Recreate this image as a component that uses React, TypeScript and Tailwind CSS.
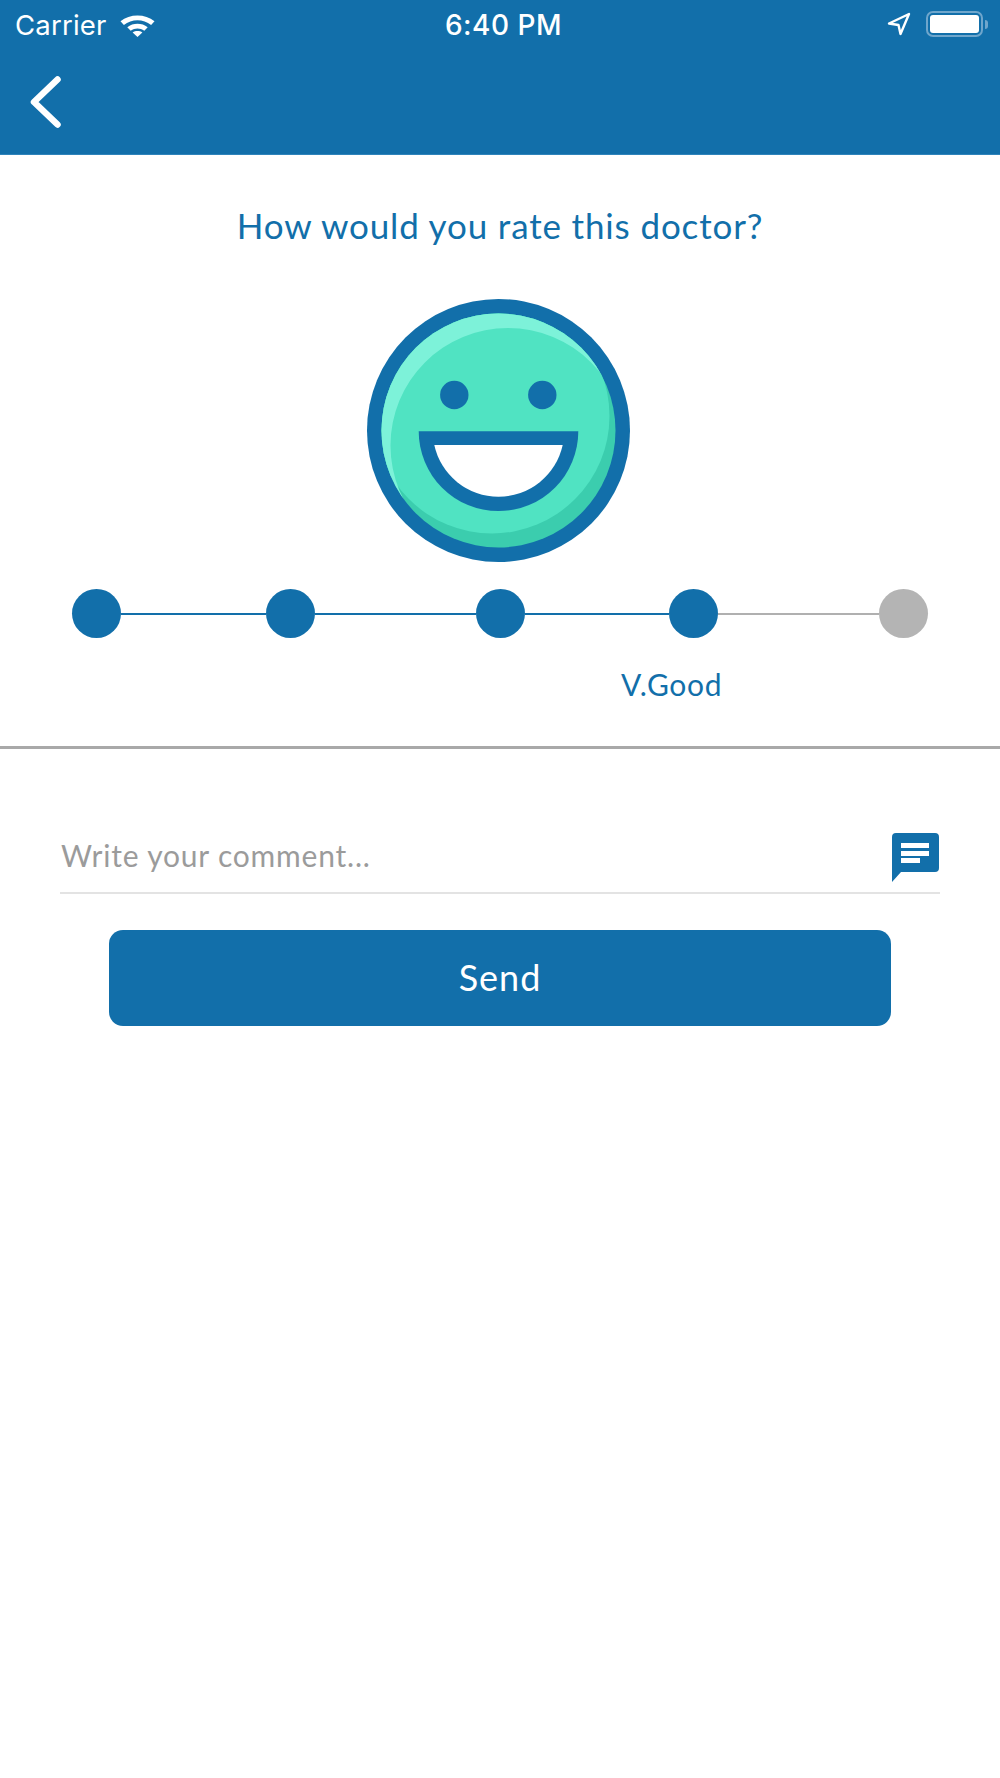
import React from "react";

function Wifi() {
  return (
    <svg width="35" height="24" viewBox="0 0 36 26" preserveAspectRatio="none" className="ml-[13px]">
      <path d="M0.5 9C10 0.5 26 0.5 35.5 9L32 13C24 6 12 6 4 13Z" fill="#fff" />
      <path d="M7.5 15.5C13.5 10.5 22.5 10.5 28.5 15.5L25 19.3C20.5 16 15.5 16 11 19.3Z" fill="#fff" />
      <path d="M13 21C16 19 20 19 23 21L18 26Z" fill="#fff" />
    </svg>
  );
}

function Face() {
  return (
    <svg width="263" height="263" viewBox="0 0 263 263" className="block">
      <defs>
        <clipPath id="inner">
          <circle cx="131.5" cy="131.5" r="117" />
        </clipPath>
      </defs>
      <circle cx="131.5" cy="131.5" r="131.5" fill="#126faa" />
      <g clipPath="url(#inner)">
        <rect width="263" height="263" fill="#3bcdae" />
        <circle cx="125" cy="117" r="117.5" fill="#50e3c2" />
        <path
          d="M0 0H263V263H0Z M23.5 146.5a117.5 117.5 0 1 0 235 0a117.5 117.5 0 1 0 -235 0Z"
          fillRule="evenodd"
          fill="#7df2d9"
        />
      </g>
      <circle cx="87.3" cy="96" r="14.2" fill="#126faa" />
      <circle cx="175.3" cy="96" r="14.2" fill="#126faa" />
      <path d="M51.7 132.3H211.3A79.8 79.8 0 0 1 51.7 132.3Z" fill="#126faa" />
      <path d="M67.3 146H195.7A65.7 65.7 0 0 1 67.3 146Z" fill="#fff" />
    </svg>
  );
}

function Dot({ on }: { on: boolean }) {
  return <div className={on ? "w-[49px] h-[49px] rounded-full shrink-0 bg-[#126faa]" : "w-[49px] h-[49px] rounded-full shrink-0 bg-[#b4b4b4]"} />;
}

export default function App() {
  return (
    <div className="w-[1000px] h-[1778px] bg-white flex flex-col font-['Lato',sans-serif]">
      <header className="h-[155px] bg-[#126faa] border-b border-[#2f84bb] flex flex-col shrink-0">
        <div className="h-[50px] relative flex items-center justify-between text-white font-['Inter',sans-serif]">
          <div className="flex items-center pl-[15px]">
            <span className="text-[27.5px] leading-[32px] tracking-[0.2px]">Carrier</span>
            <Wifi />
          </div>
          <span className="absolute left-[7px] right-0 text-center text-[28px] leading-[32px] font-medium tracking-[0.5px]">6:40 PM</span>
          <div className="flex items-center pr-[12px] pb-[2px]">
            <svg width="24" height="24" viewBox="0 0 24 24" className="mr-[15px]">
              <path d="M2 11.5L22 2L13.5 22L11.5 13Z" fill="none" stroke="#fff" strokeWidth="2.4" strokeLinejoin="round" />
            </svg>
            <div className="w-[57px] h-[26px] rounded-[7px] border-2 border-[#6fa6cc] p-[2px]">
              <div className="w-full h-full rounded-[3px] bg-white" />
            </div>
            <div className="w-[3px] h-[9px] ml-[2px] rounded-r-[3px] bg-[#6fa6cc]" />
          </div>
        </div>
        <div className="pl-[30px] pt-[26px]">
          <svg width="32" height="52" viewBox="0 0 32 52" className="block">
            <path d="M27.5 3.5L4 26L27.5 48.5" fill="none" stroke="#fff" strokeWidth="6.5" strokeLinecap="round" strokeLinejoin="round" />
          </svg>
        </div>
      </header>

      <h1 className="mt-[48px] text-center text-[35px] leading-[44px] font-normal tracking-[0.85px] text-[#126faa]">How would you rate this doctor?</h1>

      <div className="mt-[52px] flex justify-center pr-[3px]">
        <Face />
      </div>

      <div className="mt-[27px] pl-[72px] flex items-center">
        <Dot on />
        <div className="w-[145px] h-[2px] bg-[#126faa]" />
        <Dot on />
        <div className="w-[161px] h-[2px] bg-[#126faa]" />
        <Dot on />
        <div className="w-[144px] h-[2px] bg-[#126faa]" />
        <Dot on />
        <div className="w-[161px] h-[2px] bg-[#b0b0b0]" />
        <Dot on={false} />
      </div>

      <div className="mt-[26px] pl-[621px] text-[30px] leading-[40px] tracking-[0.7px] text-[#126faa]">V.Good</div>

      <div className="mt-[42px] h-[3px] bg-[#a9a9a9]" />

      <div className="mt-[84px] mx-[60px] h-[61px] border-b-2 border-[#e3e3e3] flex items-start justify-between pr-[1px]">
        <span className="pl-[1px] pt-[2px] text-[30px] leading-[40px] tracking-[0.8px] text-[#9b9b9b]">Write your comment...</span>
        <svg width="47" height="49" viewBox="0 0 47 49" className="block">
          <path d="M4 0H43A4 4 0 0 1 47 4V35A4 4 0 0 1 43 39H9L0 49V4A4 4 0 0 1 4 0Z" fill="#126faa" />
          <rect x="9" y="10" width="28" height="5" fill="#fff" />
          <rect x="9" y="18" width="28" height="5" fill="#fff" />
          <rect x="9" y="25" width="19" height="5" fill="#fff" />
        </svg>
      </div>

      <button className="mt-[36px] ml-[109px] w-[782px] h-[96px] pb-[3px] rounded-[14px] bg-[#126faa] text-white text-[36px] leading-[44px] tracking-[1px]">Send</button>
    </div>
  );
}
